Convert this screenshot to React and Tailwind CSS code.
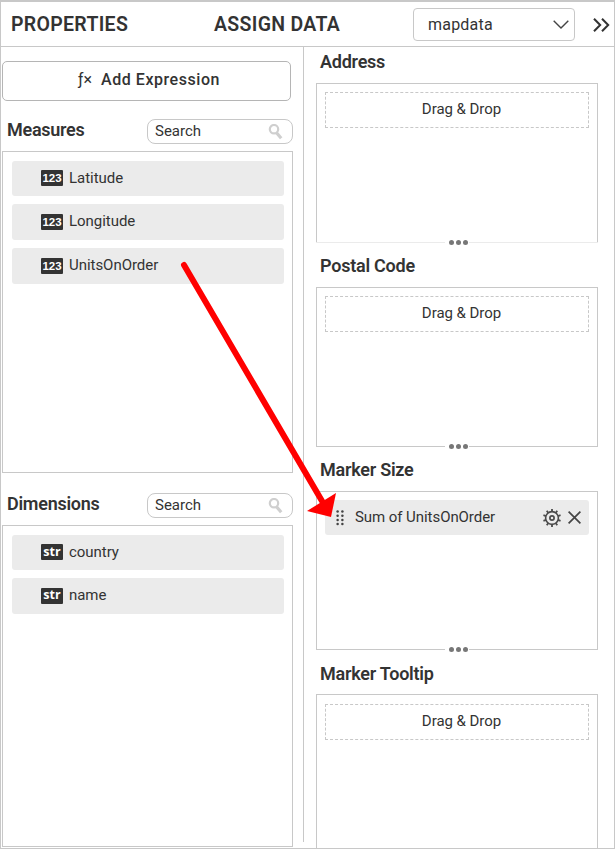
import React from "react";

function SearchBox() {
  return (
    <div className="flex h-[25px] w-[146px] items-center justify-between rounded-lg border border-[#c8c8c8] pl-[7px] pr-[8px] text-[15px] leading-[22px] text-[#333]">
      <span className="pb-[2px]">Search</span>
      <svg width="16" height="16" viewBox="0 0 16 16" fill="none" stroke="#cfcfcf">
        <circle cx="6" cy="5.2" r="4.2" strokeWidth="2.2" />
        <path d="M8.5 8.7L13.2 14.2" strokeWidth="3.2" />
      </svg>
    </div>
  );
}

function Field({ tag, name, tall }) {
  return (
    <div className={`flex items-center rounded-[3px] bg-[#ebebeb] pb-px pl-[29px] ${tall ? "h-9" : "h-[35px]"}`}>
      <span className="flex h-4 w-[22px] items-center justify-center rounded-[1px] bg-[#333] text-white">
        {tag === "123" ? (
          <span className="font-['Liberation_Sans',sans-serif] text-[11.5px] font-bold leading-4">123</span>
        ) : (
          <span className="pb-px font-['Open_Sans',sans-serif] text-[12.5px] font-bold leading-4">str</span>
        )}
      </span>
      <span className="ml-[6px] pb-px text-[15px] leading-5 tracking-[-0.04px]">{name}</span>
    </div>
  );
}

function FieldPanel({ title, tag, names, size }) {
  return (
    <section>
      <div className="flex h-[32px] items-start justify-between pl-[5px]">
        <h2 className="pt-[1px] text-[18px] font-semibold leading-5 tracking-[-0.27px]">{title}</h2>
        <SearchBox />
      </div>
      <div className={`flex w-[291px] flex-col gap-2 border border-[#c8c8c8] pl-[9px] pr-[8px] pt-[9px] ${size}`}>
        {names.map((name, i) => (
          <Field key={name} tag={tag} name={name} tall={i > 0} />
        ))}
      </div>
    </section>
  );
}

function Dots({ line }) {
  return (
    <div className="-mt-[3px] flex h-[5px] items-center">
      <div className={`h-px w-[129px] ${line}`} />
      <div className="flex w-[24px] justify-center gap-[2px] pl-[3px]">
        <i className="size-[5px] rounded-full bg-[#777]" />
        <i className="size-[5px] rounded-full bg-[#777]" />
        <i className="size-[5px] rounded-full bg-[#777]" />
      </div>
      <div className={`h-px grow ${line}`} />
    </div>
  );
}

function DropZone({ title, line = "bg-[#c8c8c8]", size = "h-[160px] pt-[8px]", titleSize = "h-[31px]", children }) {
  return (
    <section className="h-[204px] w-[282px] shrink-0">
      <h2 className={`pl-[4px] text-[18px] font-semibold leading-[20px] tracking-[-0.24px] ${titleSize}`}>{title}</h2>
      <div className={`border-x border-t border-[#c8c8c8] px-[8px] ${size}`}>
        {children || (
          <div className="flex h-9 items-center justify-center border border-dashed border-[#c8c8c8] pb-[2px] pl-[9px] text-[15px] leading-5 tracking-[-0.04px]">
            Drag &amp; Drop
          </div>
        )}
      </div>
      <Dots line={line} />
    </section>
  );
}

function Gear() {
  return (
    <svg width="18" height="18" viewBox="0 0 18 18" fill="none" stroke="#4a4a4a">
      <circle cx="9" cy="9" r="6.4" strokeWidth="1.6" />
      <circle cx="9" cy="9" r="2.1" strokeWidth="1.7" />
      <g strokeWidth="1.8">
        {[0, 36, 72, 108, 144, 180, 216, 252, 288, 324].map((a) => (
          <path key={a} d="M9 0v2.6" transform={`rotate(${a} 9 9)`} />
        ))}
      </g>
    </svg>
  );
}

function Grip() {
  return (
    <svg width="8" height="16" viewBox="0 0 8 16" fill="#444">
      {[1.5, 5.7, 9.9, 14.1].map((y) => (
        <React.Fragment key={y}>
          <circle cx="1.6" cy={y} r="1.25" />
          <circle cx="6.4" cy={y} r="1.25" />
        </React.Fragment>
      ))}
    </svg>
  );
}

export default function App() {
  return (
    <div className="relative flex h-[849px] w-[615px] flex-col overflow-hidden border border-t-2 border-[#c8c8c8] bg-white font-[Roboto,sans-serif] text-[#333]">
      <header className="flex h-[45px] shrink-0 items-center border-b border-[#c8c8c8]">
        <h1 className="w-[203px] pl-[10px] pt-px text-[19.5px] font-semibold leading-6 tracking-[0.3px]">PROPERTIES</h1>
        <h1 className="w-[209px] pl-[10px] pt-px text-[19.5px] font-semibold leading-6 tracking-[0.3px]">ASSIGN DATA</h1>
        <div className="flex h-[33px] w-[162px] items-center justify-between rounded border border-[#c8c8c8] pl-[14px] pr-[5px] text-[16px] tracking-[0.2px]">
          <span className="pt-px">mapdata</span>
          <svg width="16" height="10" viewBox="0 0 16 10" fill="none" stroke="#444" strokeWidth="1.4">
            <path d="M.7 1.7L8 9l7.3-7.3" />
          </svg>
        </div>
        <svg className="ml-[18px] mt-[2px]" width="17" height="16" viewBox="0 0 17 16" fill="none" stroke="#333" strokeWidth="2">
          <path d="M1 1.7L7.2 8 1 14.3M9 1.7L15.2 8 9 14.3" />
        </svg>
      </header>
      <div className="flex min-h-0 grow">
        <div className="w-[302px] pl-[1px] pt-[14px]">
          <button className="flex h-10 w-[289px] items-center justify-center rounded-[5px] border border-[#b5b5b5] pb-[3px] pl-[5px] text-[16px] font-medium tracking-[0.55px]">
            <span className="mr-[9px] font-normal tracking-normal">ƒ×</span>
            <span>Add Expression</span>
          </button>
          <div className="flex flex-col gap-[20px] pt-[18px]">
            <div className="w-[291px]">
              <FieldPanel title="Measures" tag="123" names={["Latitude", "Longitude", "UnitsOnOrder"]} size="h-[322px]" />
            </div>
            <div className="w-[291px]">
              <FieldPanel title="Dimensions" tag="str" names={["country", "name"]} size="h-[322px]" />
            </div>
          </div>
        </div>
        <div className="h-[795px] w-px bg-[#c8c8c8]" />
        <main className="flex flex-col pl-[12px] pt-[5px]">
          <DropZone title="Address" line="bg-[#ebebeb]" />
          <DropZone title="Postal Code" />
          <DropZone title="Marker Size" size="h-[159px] pt-[8px]">
            <div className="flex h-[35px] items-center rounded-[3px] bg-[#ebebeb] pl-[11px] pr-[8px] text-[15px] tracking-[-0.06px]">
              <Grip />
              <span className="ml-[11px] grow">Sum of UnitsOnOrder</span>
              <Gear />
              <svg className="ml-[7px]" width="13" height="13" viewBox="0 0 13 13" stroke="#444" strokeWidth="1.7">
                <path d="M.6.6l11.8 11.8M12.4.6L.6 12.4" />
              </svg>
            </div>
          </DropZone>
          <DropZone title="Marker Tooltip" titleSize="h-[30px]" size="h-[161px] pt-[9px]" />
        </main>
      </div>
      <svg className="pointer-events-none absolute -left-px -top-[2px]" width="615" height="849" viewBox="0 0 615 849">
        <path d="M184 265L322 501" stroke="#f00" strokeWidth="6" strokeLinecap="round" />
        <path d="M336 493L307 511L331 517Z" fill="#f00" />
      </svg>
    </div>
  );
}
